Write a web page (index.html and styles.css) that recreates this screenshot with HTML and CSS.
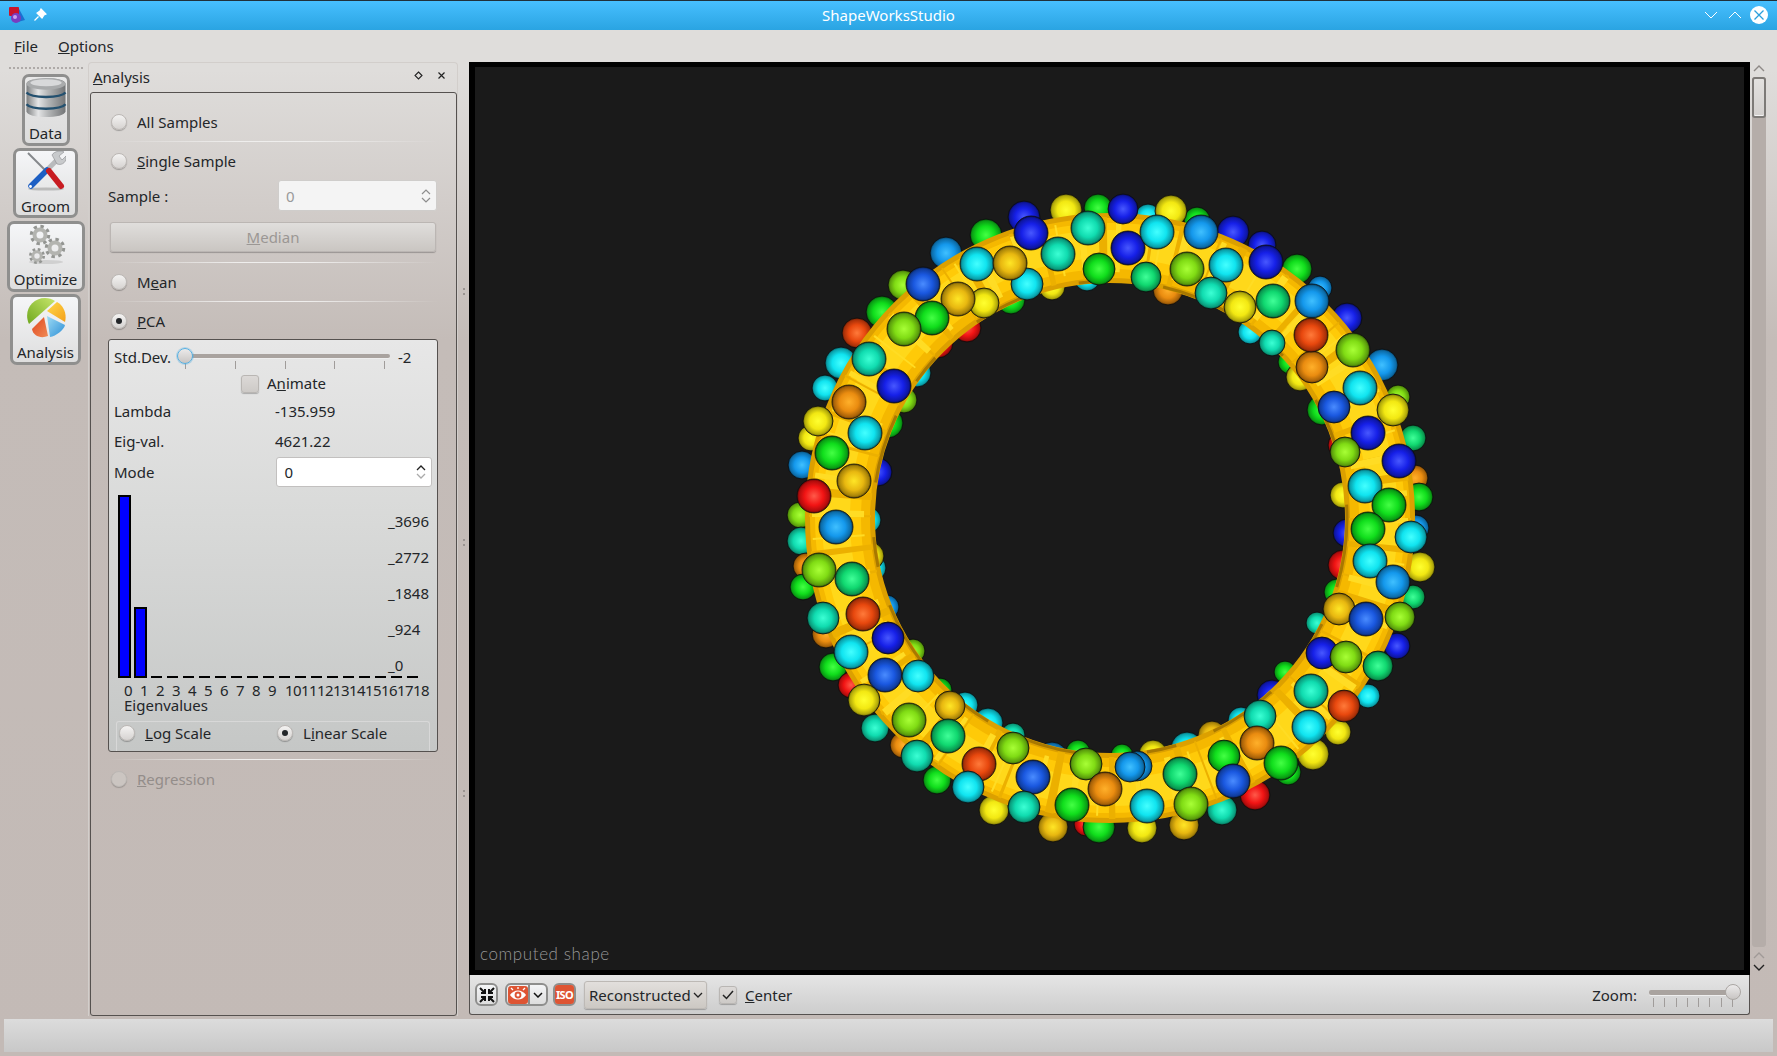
FILE: index.html
```html
<!DOCTYPE html>
<html lang="en">
<head>
<meta charset="utf-8">
<title>ShapeWorksStudio</title>
<link rel="stylesheet" href="styles.css">
</head>
<body>
<div class="window">
  <header class="titlebar">
    <div class="title-left">
      <svg class="app-logo" viewBox="0 0 18 18" width="18" height="18"><path d="M10 1 L17 14 L10 16 Z" fill="#1c6fd0"/><rect x="1" y="1" width="10" height="9" rx="1" fill="#c8142c"/><circle cx="8" cy="12" r="5" fill="#7a3cc0"/><circle cx="7" cy="11" r="2" fill="#c9a0ee"/></svg>
      <svg class="pin" viewBox="0 0 14 14" width="14" height="14"><path d="M8 1 L13 6 L11 7 L9 10 L4 5 L7 3 Z M5.5 8.5 L1.5 12.5" fill="#fff" stroke="#fff" stroke-width="1.2"/></svg>
    </div>
    <div class="title-text">ShapeWorksStudio</div>
    <div class="title-controls">
      <svg viewBox="0 0 14 8" width="14" height="8"><path d="M1 1 L7 7 L13 1" fill="none" stroke="#fff" stroke-width="1"/></svg>
      <svg viewBox="0 0 14 8" width="14" height="8"><path d="M1 7 L7 1 L13 7" fill="none" stroke="#fff" stroke-width="1"/></svg>
      <svg class="close-ic" viewBox="0 0 18 18" width="18" height="18"><circle cx="9" cy="9" r="9" fill="#fff"/><path d="M4.5 4.5 L13.5 13.5 M13.5 4.5 L4.5 13.5" stroke="#2b9fdc" stroke-width="1.3"/></svg>
    </div>
  </header>

  <nav class="menubar">
    <span class="menu-item"><u>F</u>ile</span>
    <span class="menu-item"><u>O</u>ptions</span>
  </nav>

  <div class="main">
    <aside class="toolcol">
      <div class="tool-handle"></div>
      <div class="tool tool-data">
        <svg viewBox="0 0 42 42" width="42" height="41">
          <defs><linearGradient id="metal" x1="0" x2="1" y1="0" y2="0"><stop offset="0" stop-color="#7d7f80"/><stop offset=".3" stop-color="#e4e5e6"/><stop offset=".55" stop-color="#b5b7b8"/><stop offset="1" stop-color="#737577"/></linearGradient></defs>
          <path d="M1 7 C1 -1 41 -1 41 7 L41 35 C41 43 1 43 1 35 Z" fill="url(#metal)"/>
          <ellipse cx="21" cy="7" rx="20" ry="6" fill="#a9abac"/>
          <ellipse cx="21" cy="6" rx="16" ry="3.6" fill="#d8d9da"/>
          <path d="M1 16 C6 22 36 22 41 16 M1 28 C6 34 36 34 41 28" fill="none" stroke="#23506f" stroke-width="2.4"/>
        </svg>
        <span>Data</span>
      </div>
      <div class="tool tool-groom">
        <svg viewBox="0 0 40 40" width="40" height="40">
          <ellipse cx="20" cy="38" rx="18" ry="1.6" fill="#bbb"/>
          <path d="M2 2 L20 20" stroke="#85888b" stroke-width="2"/>
          <path d="M22 18 L33 7" stroke="#b9bbbd" stroke-width="5"/>
          <path d="M26 4 C28 0 36 -1 38 1 L33 5 L36 9 L40 5 C41 10 37 15 31 13 Z" fill="#c8cacc" stroke="#8a8c8e" stroke-width=".6"/>
          <path d="M21 19 L5 35" stroke="#1d5fc4" stroke-width="5.5" stroke-linecap="round"/>
          <path d="M23 20 L35 35" stroke="#c81c22" stroke-width="6" stroke-linecap="round"/>
          <circle cx="4.5" cy="35.5" r="1.4" fill="#fff"/>
        </svg>
        <span>Groom</span>
      </div>
      <div class="tool tool-opt">
        <svg viewBox="0 0 40 42" width="40" height="42">
          <ellipse cx="20" cy="38" rx="17" ry="2" fill="#d0d0d0"/>
          <g fill="none" stroke="#939592">
            <circle cx="14" cy="11" r="8.5" stroke-width="3.5" stroke-dasharray="3.3 3.4"/>
            <circle cx="14" cy="11" r="5.5" stroke-width="4" stroke="#b3b4b0"/>
            <circle cx="29" cy="24" r="8.5" stroke-width="3.5" stroke-dasharray="3.3 3.4"/>
            <circle cx="29" cy="24" r="5.5" stroke-width="4" stroke="#b3b4b0"/>
            <circle cx="11" cy="32" r="6.5" stroke-width="3" stroke-dasharray="2.6 2.5"/>
            <circle cx="11" cy="32" r="4.2" stroke-width="3" stroke="#b3b4b0"/>
          </g>
        </svg>
        <span>Optimize</span>
      </div>
      <div class="tool tool-analysis">
        <svg viewBox="0 0 40 42" width="40" height="42">
          <defs>
            <linearGradient id="pg" x1="0" x2="1" y1="1" y2="0"><stop offset="0" stop-color="#6fa81e"/><stop offset="1" stop-color="#c7e66b"/></linearGradient>
            <linearGradient id="py" x1="0" x2="1" y1="0" y2="1"><stop offset="0" stop-color="#ffd94a"/><stop offset="1" stop-color="#f4a01a"/></linearGradient>
            <linearGradient id="pb" x1="0" x2="1" y1="0" y2="1"><stop offset="0" stop-color="#9fdcf5"/><stop offset="1" stop-color="#2d8fd6"/></linearGradient>
            <linearGradient id="pr" x1="0" x2="1" y1="0" y2="1"><stop offset="0" stop-color="#e0461e"/><stop offset="1" stop-color="#f08a55"/></linearGradient>
          </defs>
          <path d="M3 27 C-3 14 6 1 19 1 C23 1 26 2 29 4 Z" fill="url(#pg)"/>
          <path d="M21 14 L31 5 C38 9 41 17 39 25 Z" fill="url(#py)"/>
          <path d="M21 19 L39 28 C38 33 30 39 24 40 Z" fill="url(#pb)"/>
          <path d="M18 20 L22 39 C15 42 7 39 6 32 Z" fill="url(#pr)"/>
        </svg>
        <span>Analysis</span>
      </div>
    </aside>

    <section class="dock">
      <div class="dock-head">
        <span class="dock-title"><u>A</u>nalysis</span>
        <span class="dock-btns">
          <svg viewBox="0 0 9 9" width="9" height="9"><path d="M4.5 1 L8 4.5 L4.5 8 L1 4.5 Z" fill="none" stroke="#222" stroke-width="1.1"/></svg>
          <svg viewBox="0 0 9 9" width="9" height="9"><path d="M1.5 1.5 L7.5 7.5 M7.5 1.5 L1.5 7.5" stroke="#222" stroke-width="1.2"/></svg>
        </span>
      </div>
      <div class="dock-frame">
        <label class="radio-row"><i class="radio"></i>All Samples</label>
        <div class="sep"></div>
        <label class="radio-row"><i class="radio"></i><span><u>S</u>ingle Sample</span></label>
        <div class="sample-row">
          <span>Sample :</span>
          <div class="spin spin-off"><span>0</span>
            <svg viewBox="0 0 10 18" width="10" height="18"><path d="M1 7 L5 3 L9 7 M1 11 L5 15 L9 11" fill="none" stroke="#8d8d8d" stroke-width="1.2"/></svg>
          </div>
        </div>
        <button class="median"><u>M</u>edian</button>
        <div class="sep sep-wide"></div>
        <label class="radio-row"><i class="radio"></i><span>M<u>e</u>an</span></label>
        <div class="sep"></div>
        <label class="radio-row"><i class="radio on"></i><span><u>P</u>CA</span></label>

        <div class="pca-box">
          <div class="std-row">
            <span class="std-label">Std.Dev.</span>
            <div class="slider">
              <div class="groove"></div>
              <div class="ticks"><i></i><i></i><i></i><i></i><i></i></div>
              <div class="handle handle-focus"></div>
            </div>
            <span class="std-val">-2</span>
          </div>
          <div class="animate-row"><i class="check"></i><span>A<u>n</u>imate</span></div>
          <div class="kv kv-first"><span>Lambda</span><span>-135.959</span></div>
          <div class="kv"><span>Eig-val.</span><span>4621.22</span></div>
          <div class="mode-row"><span>Mode</span>
            <div class="spin spin-on"><span>0</span>
              <svg viewBox="0 0 10 18" width="10" height="18"><path d="M1 7 L5 3 L9 7" fill="none" stroke="#222" stroke-width="1.3"/><path d="M1 11 L5 15 L9 11" fill="none" stroke="#aaa" stroke-width="1.3"/></svg>
            </div>
          </div>
          <div class="chart">
            <div class="bars">
              <i class="bar" style="height:183px"></i><i class="bar" style="height:71px"></i>
              <i class="zero"></i><i class="zero"></i><i class="zero"></i><i class="zero"></i><i class="zero"></i><i class="zero"></i><i class="zero"></i><i class="zero"></i><i class="zero"></i><i class="zero"></i><i class="zero"></i><i class="zero"></i><i class="zero"></i><i class="zero"></i><i class="zero"></i><i class="zero"></i><i class="zero"></i>
            </div>
            <div class="yaxis"><span>_3696</span><span>_2772</span><span>_1848</span><span>_924</span><span>_0</span></div>
          </div>
          <div class="xlabels"><span>0</span><span>1</span><span>2</span><span>3</span><span>4</span><span>5</span><span>6</span><span>7</span><span>8</span><span>9</span><span>10</span><span>11</span><span>12</span><span>13</span><span>14</span><span>15</span><span>16</span><span>17</span><span>18</span></div>
          <div class="xtitle">Eigenvalues</div>
          <div class="scale-row">
            <label><i class="radio"></i><span><u>L</u>og Scale</span></label>
            <label><i class="radio on"></i><span>L<u>i</u>near Scale</span></label>
          </div>
        </div>

        <div class="sep"></div>
        <label class="radio-row off"><i class="radio"></i><span><u>R</u>egression</span></label>
      </div>
    </section>

    <div class="splitter"><i></i><i></i><i></i></div>

    <section class="center">
      <div class="viewer">
        <svg class="scene" viewBox="475 67 1269 903" width="1269" height="903">
          <defs>
            <radialGradient id="R"><stop offset="0" stop-color="#ff5a4a"/><stop offset=".55" stop-color="#f21414"/><stop offset=".88" stop-color="#b00c0c"/><stop offset="1" stop-color="#5a0606"/></radialGradient>
            <radialGradient id="O"><stop offset="0" stop-color="#ff7a3a"/><stop offset=".55" stop-color="#e8480e"/><stop offset=".88" stop-color="#a83008"/><stop offset="1" stop-color="#581a04"/></radialGradient>
            <radialGradient id="A"><stop offset="0" stop-color="#ffb02a"/><stop offset=".55" stop-color="#ea8c10"/><stop offset=".88" stop-color="#a86208"/><stop offset="1" stop-color="#5a3504"/></radialGradient>
            <radialGradient id="G"><stop offset="0" stop-color="#ffe626"/><stop offset=".55" stop-color="#e8b810"/><stop offset=".88" stop-color="#a88308"/><stop offset="1" stop-color="#5a4604"/></radialGradient>
            <radialGradient id="Y"><stop offset="0" stop-color="#ffff30"/><stop offset=".55" stop-color="#f2e812"/><stop offset=".88" stop-color="#b0a80a"/><stop offset="1" stop-color="#5c5804"/></radialGradient>
            <radialGradient id="L"><stop offset="0" stop-color="#a8ff36"/><stop offset=".55" stop-color="#80dc14"/><stop offset=".88" stop-color="#5a9c0c"/><stop offset="1" stop-color="#2e5006"/></radialGradient>
            <radialGradient id="N"><stop offset="0" stop-color="#44ff44"/><stop offset=".55" stop-color="#10de1c"/><stop offset=".88" stop-color="#0a9c14"/><stop offset="1" stop-color="#04500a"/></radialGradient>
            <radialGradient id="E"><stop offset="0" stop-color="#40ff98"/><stop offset=".55" stop-color="#10d870"/><stop offset=".88" stop-color="#0a9850"/><stop offset="1" stop-color="#044e28"/></radialGradient>
            <radialGradient id="T"><stop offset="0" stop-color="#3cffd4"/><stop offset=".55" stop-color="#10dcb0"/><stop offset=".88" stop-color="#0a9c7c"/><stop offset="1" stop-color="#045040"/></radialGradient>
            <radialGradient id="C"><stop offset="0" stop-color="#44ffff"/><stop offset=".55" stop-color="#10e4f0"/><stop offset=".88" stop-color="#0aa0aa"/><stop offset="1" stop-color="#045258"/></radialGradient>
            <radialGradient id="S"><stop offset="0" stop-color="#40c0ff"/><stop offset=".55" stop-color="#1498ec"/><stop offset=".88" stop-color="#0c6ca8"/><stop offset="1" stop-color="#063858"/></radialGradient>
            <radialGradient id="B"><stop offset="0" stop-color="#4a8cff"/><stop offset=".55" stop-color="#1a58e0"/><stop offset=".88" stop-color="#103ea0"/><stop offset="1" stop-color="#082054"/></radialGradient>
            <radialGradient id="D"><stop offset="0" stop-color="#4858ff"/><stop offset=".55" stop-color="#1620e8"/><stop offset=".88" stop-color="#0e16a4"/><stop offset="1" stop-color="#060a56"/></radialGradient>
          </defs>
          <g class="back">
            <circle cx="1024" cy="217" r="16" fill="url(#D)"/><circle cx="1066" cy="210" r="16" fill="url(#Y)"/><circle cx="1098" cy="208" r="14" fill="url(#N)"/><circle cx="986" cy="235" r="16" fill="url(#N)"/><circle cx="946" cy="253" r="16" fill="url(#S)"/><circle cx="1052" cy="287" r="13" fill="url(#Y)"/><circle cx="1087" cy="278" r="13" fill="url(#C)"/><circle cx="1011" cy="300" r="14" fill="url(#N)"/><circle cx="903" cy="285" r="15" fill="url(#L)"/><circle cx="882" cy="312" r="16" fill="url(#N)"/><circle cx="857" cy="333" r="15" fill="url(#O)"/><circle cx="967" cy="328" r="14" fill="url(#R)"/><circle cx="938" cy="343" r="15" fill="url(#R)"/><circle cx="841" cy="363" r="16" fill="url(#C)"/><circle cx="917" cy="373" r="14" fill="url(#C)"/><circle cx="825" cy="388" r="13" fill="url(#C)"/><circle cx="904" cy="400" r="13" fill="url(#L)"/><circle cx="888" cy="423" r="15" fill="url(#N)"/><circle cx="811" cy="438" r="13" fill="url(#Y)"/><circle cx="802" cy="465" r="14" fill="url(#S)"/><circle cx="878" cy="472" r="14" fill="url(#D)"/>
            <circle cx="1148" cy="217" r="13" fill="url(#C)"/><circle cx="1197" cy="220" r="13" fill="url(#N)"/><circle cx="1171" cy="211" r="16" fill="url(#Y)"/><circle cx="1233" cy="232" r="16" fill="url(#D)"/><circle cx="1262" cy="245" r="14" fill="url(#D)"/><circle cx="1297" cy="269" r="15" fill="url(#N)"/><circle cx="1168" cy="290" r="15" fill="url(#A)"/><circle cx="1320" cy="288" r="12" fill="url(#S)"/><circle cx="1347" cy="318" r="15" fill="url(#D)"/><circle cx="1250" cy="332" r="12" fill="url(#C)"/><circle cx="1290" cy="362" r="12" fill="url(#N)"/><circle cx="1300" cy="377" r="14" fill="url(#Y)"/><circle cx="1382" cy="365" r="16" fill="url(#S)"/><circle cx="1398" cy="397" r="12" fill="url(#L)"/><circle cx="1322" cy="410" r="15" fill="url(#N)"/><circle cx="1413" cy="438" r="13" fill="url(#E)"/><circle cx="1341" cy="445" r="13" fill="url(#R)"/><circle cx="1415" cy="478" r="13" fill="url(#A)"/><circle cx="1343" cy="495" r="13" fill="url(#Y)"/><circle cx="1419" cy="497" r="14" fill="url(#N)"/>
            <circle cx="1347" cy="533" r="14" fill="url(#D)"/><circle cx="1416" cy="528" r="13" fill="url(#S)"/><circle cx="1343" cy="565" r="15" fill="url(#R)"/><circle cx="1420" cy="567" r="15" fill="url(#Y)"/><circle cx="1337" cy="592" r="13" fill="url(#N)"/><circle cx="1413" cy="597" r="12" fill="url(#E)"/><circle cx="1317" cy="623" r="11" fill="url(#T)"/><circle cx="1397" cy="646" r="13" fill="url(#D)"/><circle cx="1368" cy="696" r="12" fill="url(#C)"/><circle cx="1272" cy="695" r="15" fill="url(#D)"/><circle cx="1285" cy="672" r="11" fill="url(#N)"/><circle cx="1241" cy="720" r="13" fill="url(#C)"/><circle cx="1338" cy="732" r="13" fill="url(#Y)"/><circle cx="1212" cy="735" r="14" fill="url(#G)"/><circle cx="1187" cy="748" r="16" fill="url(#C)"/><circle cx="1153" cy="754" r="14" fill="url(#Y)"/><circle cx="1288" cy="772" r="13" fill="url(#N)"/><circle cx="1313" cy="754" r="16" fill="url(#Y)"/><circle cx="1255" cy="795" r="15" fill="url(#R)"/><circle cx="1222" cy="810" r="15" fill="url(#T)"/><circle cx="1184" cy="825" r="15" fill="url(#G)"/><circle cx="1142" cy="828" r="15" fill="url(#Y)"/>
            <circle cx="800" cy="515" r="13" fill="url(#L)"/><circle cx="868" cy="520" r="13" fill="url(#C)"/><circle cx="801" cy="541" r="14" fill="url(#T)"/><circle cx="873" cy="568" r="13" fill="url(#C)"/><circle cx="870" cy="556" r="14" fill="url(#Y)"/><circle cx="806" cy="566" r="13" fill="url(#A)"/><circle cx="803" cy="587" r="13" fill="url(#N)"/><circle cx="887" cy="607" r="12" fill="url(#S)"/><circle cx="826" cy="634" r="14" fill="url(#A)"/><circle cx="913" cy="651" r="12" fill="url(#L)"/><circle cx="833" cy="667" r="14" fill="url(#N)"/><circle cx="851" cy="685" r="13" fill="url(#R)"/><circle cx="940" cy="690" r="12" fill="url(#N)"/><circle cx="965" cy="705" r="13" fill="url(#C)"/><circle cx="875" cy="728" r="14" fill="url(#T)"/><circle cx="988" cy="723" r="15" fill="url(#C)"/><circle cx="1013" cy="735" r="12" fill="url(#T)"/><circle cx="903" cy="745" r="13" fill="url(#A)"/><circle cx="1052" cy="758" r="16" fill="url(#S)"/><circle cx="1078" cy="752" r="12" fill="url(#N)"/><circle cx="1122" cy="755" r="11" fill="url(#N)"/><circle cx="937" cy="780" r="14" fill="url(#N)"/><circle cx="994" cy="810" r="15" fill="url(#Y)"/><circle cx="1053" cy="827" r="15" fill="url(#G)"/><circle cx="1086" cy="824" r="12" fill="url(#R)"/><circle cx="1099" cy="827" r="16" fill="url(#N)"/>
          </g>
          <g class="tube" fill="none">
            <circle cx="1110" cy="518" r="270" stroke="#dca000" stroke-width="70"/>
            <circle cx="1110" cy="518" r="270" stroke="#f5b800" stroke-width="60"/>
            <circle cx="1110" cy="518" r="272" stroke="#ffca08" stroke-width="46"/>
            <circle cx="1110" cy="518" r="274" stroke="#ffd81a" stroke-width="28"/>
            <circle cx="1110" cy="518" r="270" stroke="#ecb000" stroke-width="62" stroke-dasharray="3 23 6 31 2 17 8 41"/>
            <circle cx="1110" cy="518" r="272" stroke="#ffdc24" stroke-width="52" stroke-dasharray="5 37 2 19 7 29"/>
            <circle cx="1110" cy="518" r="237" stroke="#a87800" stroke-width="3" stroke-dasharray="70 40 30 55"/>
          </g>
          <g class="front">
            <circle cx="1123" cy="209" r="15" fill="url(#D)"/><circle cx="1031" cy="233" r="17" fill="url(#D)"/><circle cx="1088" cy="228" r="17" fill="url(#T)"/><circle cx="1128" cy="248" r="17" fill="url(#D)"/><circle cx="1058" cy="254" r="17" fill="url(#T)"/><circle cx="1099" cy="269" r="16" fill="url(#N)"/><circle cx="1027" cy="284" r="16" fill="url(#C)"/><circle cx="977" cy="264" r="17" fill="url(#C)"/><circle cx="1010" cy="263" r="17" fill="url(#G)"/><circle cx="984" cy="303" r="15" fill="url(#Y)"/><circle cx="923" cy="284" r="17" fill="url(#B)"/><circle cx="958" cy="299" r="17" fill="url(#G)"/><circle cx="932" cy="318" r="17" fill="url(#N)"/><circle cx="904" cy="329" r="17" fill="url(#L)"/><circle cx="869" cy="359" r="17" fill="url(#T)"/><circle cx="894" cy="386" r="17" fill="url(#D)"/><circle cx="849" cy="402" r="17" fill="url(#A)"/><circle cx="818" cy="421" r="15" fill="url(#Y)"/><circle cx="865" cy="433" r="17" fill="url(#C)"/><circle cx="832" cy="453" r="17" fill="url(#N)"/><circle cx="854" cy="481" r="17" fill="url(#G)"/><circle cx="814" cy="496" r="17" fill="url(#R)"/>
            <circle cx="1157" cy="232" r="17" fill="url(#C)"/><circle cx="1201" cy="232" r="17" fill="url(#S)"/><circle cx="1266" cy="262" r="17" fill="url(#D)"/><circle cx="1226" cy="265" r="17" fill="url(#C)"/><circle cx="1187" cy="269" r="17" fill="url(#L)"/><circle cx="1146" cy="277" r="15" fill="url(#E)"/><circle cx="1211" cy="293" r="16" fill="url(#T)"/><circle cx="1240" cy="307" r="16" fill="url(#Y)"/><circle cx="1273" cy="301" r="17" fill="url(#E)"/><circle cx="1312" cy="301" r="17" fill="url(#S)"/><circle cx="1272" cy="343" r="13" fill="url(#T)"/><circle cx="1312" cy="367" r="16" fill="url(#A)"/><circle cx="1311" cy="335" r="17" fill="url(#O)"/><circle cx="1353" cy="350" r="17" fill="url(#L)"/><circle cx="1360" cy="388" r="17" fill="url(#C)"/><circle cx="1393" cy="410" r="16" fill="url(#Y)"/><circle cx="1334" cy="407" r="16" fill="url(#B)"/><circle cx="1368" cy="433" r="17" fill="url(#D)"/><circle cx="1345" cy="452" r="15" fill="url(#L)"/><circle cx="1399" cy="461" r="17" fill="url(#D)"/><circle cx="1365" cy="486" r="17" fill="url(#C)"/>
            <circle cx="1389" cy="505" r="17" fill="url(#N)"/><circle cx="1368" cy="529" r="17" fill="url(#N)"/><circle cx="1411" cy="537" r="16" fill="url(#C)"/><circle cx="1370" cy="561" r="17" fill="url(#C)"/><circle cx="1393" cy="582" r="17" fill="url(#S)"/><circle cx="1339" cy="609" r="16" fill="url(#G)"/><circle cx="1400" cy="617" r="15" fill="url(#L)"/><circle cx="1366" cy="619" r="17" fill="url(#B)"/><circle cx="1322" cy="653" r="16" fill="url(#D)"/><circle cx="1346" cy="657" r="16" fill="url(#L)"/><circle cx="1378" cy="666" r="15" fill="url(#E)"/><circle cx="1311" cy="691" r="17" fill="url(#T)"/><circle cx="1344" cy="706" r="16" fill="url(#O)"/><circle cx="1260" cy="716" r="16" fill="url(#T)"/><circle cx="1309" cy="727" r="17" fill="url(#C)"/><circle cx="1224" cy="756" r="16" fill="url(#N)"/><circle cx="1257" cy="743" r="17" fill="url(#A)"/><circle cx="1281" cy="763" r="17" fill="url(#N)"/><circle cx="1137" cy="766" r="15" fill="url(#S)"/><circle cx="1180" cy="774" r="17" fill="url(#E)"/><circle cx="1233" cy="781" r="17" fill="url(#B)"/><circle cx="1191" cy="804" r="17" fill="url(#L)"/><circle cx="1147" cy="806" r="17" fill="url(#C)"/>
            <circle cx="836" cy="527" r="17" fill="url(#S)"/><circle cx="819" cy="570" r="17" fill="url(#L)"/><circle cx="852" cy="579" r="17" fill="url(#E)"/><circle cx="823" cy="618" r="16" fill="url(#T)"/><circle cx="863" cy="614" r="17" fill="url(#O)"/><circle cx="888" cy="638" r="16" fill="url(#D)"/><circle cx="851" cy="652" r="17" fill="url(#C)"/><circle cx="885" cy="675" r="17" fill="url(#B)"/><circle cx="918" cy="676" r="16" fill="url(#C)"/><circle cx="864" cy="700" r="16" fill="url(#Y)"/><circle cx="950" cy="706" r="15" fill="url(#G)"/><circle cx="909" cy="720" r="17" fill="url(#L)"/><circle cx="948" cy="736" r="17" fill="url(#E)"/><circle cx="1013" cy="748" r="16" fill="url(#L)"/><circle cx="917" cy="756" r="16" fill="url(#T)"/><circle cx="1086" cy="764" r="16" fill="url(#L)"/><circle cx="979" cy="764" r="17" fill="url(#O)"/><circle cx="1033" cy="777" r="17" fill="url(#B)"/><circle cx="1130" cy="767" r="15" fill="url(#S)"/><circle cx="1105" cy="789" r="17" fill="url(#A)"/><circle cx="1072" cy="805" r="17" fill="url(#N)"/><circle cx="968" cy="787" r="16" fill="url(#C)"/><circle cx="1024" cy="807" r="16" fill="url(#T)"/>
          </g>
        </svg>
        <div class="caption">computed shape</div>
      </div>
      <div class="viewbar">
        <button class="vbtn">
          <svg viewBox="0 0 16 16" width="16" height="16"><path d="M1 1 L6 6 M6 2 V6 H2 M15 1 L10 6 M10 2 V6 H14 M1 15 L6 10 M6 14 V10 H2 M15 15 L10 10 M10 14 V10 H14" fill="none" stroke="#111" stroke-width="2"/></svg>
        </button>
        <div class="vsplit">
          <span class="vsplit-main"><svg viewBox="0 0 20 18" width="20" height="18"><rect x="0" y="0" width="20" height="18" rx="3" fill="#de5433"/><path d="M2 9 C6 3 14 3 18 9 C14 15 6 15 2 9 Z" fill="#fff"/><circle cx="10" cy="9" r="3.4" fill="#de5433"/><circle cx="10" cy="9" r="1.5" fill="#fff"/><path d="M3 2 L5 4 M10 1 V3 M17 2 L15 4" stroke="#fff" stroke-width="1.3"/></svg></span>
          <span class="vsplit-arrow"><svg viewBox="0 0 10 6" width="10" height="6"><path d="M1 1 L5 5 L9 1" fill="none" stroke="#111" stroke-width="1.5"/></svg></span>
        </div>
        <button class="vbtn vbtn-iso"><span class="iso">ISO</span></button>
        <div class="combo"><span>Reconstructed</span><svg viewBox="0 0 10 6" width="10" height="6"><path d="M1 1 L5 5 L9 1" fill="none" stroke="#222" stroke-width="1.3"/></svg></div>
        <i class="check check-on"><svg viewBox="0 0 12 10" width="12" height="10"><path d="M1 5 L4.5 8.5 L11 1" fill="none" stroke="#222" stroke-width="1.5"/></svg></i>
        <span class="center-label"><u>C</u>enter</span>
        <span class="zoom-label">Zoom:</span>
        <div class="zoom-slider">
          <div class="groove zoom-groove"></div>
          <div class="ticks zoom-ticks"><i></i><i></i><i></i><i></i><i></i><i></i><i></i><i></i></div>
          <div class="handle zoom-handle"></div>
        </div>
      </div>
    </section>

    <div class="vscroll">
      <svg viewBox="0 0 12 7" width="12" height="7"><path d="M1 6 L6 1 L11 6" fill="none" stroke="#8e8986" stroke-width="1.4"/></svg>
      <div class="vtrack"><div class="vthumb"></div></div>
      <svg viewBox="0 0 12 7" width="12" height="7"><path d="M1 6 L6 1 L11 6" fill="none" stroke="#a09a97" stroke-width="1.4"/></svg>
      <svg viewBox="0 0 12 7" width="12" height="7"><path d="M1 1 L6 6 L11 1" fill="none" stroke="#222" stroke-width="1.4"/></svg>
    </div>
  </div>

  <footer class="statusbar"></footer>
</div>
</body>
</html>
```
FILE: styles.css
```css
* { box-sizing: border-box; }
html, body { margin: 0; padding: 0; }
body { width: 1777px; height: 1056px; overflow: hidden; font-family: "Noto Sans", sans-serif; font-size: 15px; color: #232629; }
i { display: block; font-style: normal; }
button { font: inherit; }

.window { width: 1777px; height: 1056px; display: flex; flex-direction: column; background: linear-gradient(#dfdddb 0, #dfdddb 70px, #c4bcb8 340px, #c3bab6 100%); padding-bottom: 4px; }

.titlebar { height: 30px; flex: none; display: flex; align-items: center; padding-bottom: 2px; color: #fff; font-size: 15px; position: relative; border-top: 1px solid #20303a; background: linear-gradient(#47bfff, #2aa4e2); }
.title-left { display: flex; align-items: center; gap: 7px; padding-left: 8px; width: 200px; }
.title-text { flex: 1; text-align: center; }
.title-controls { width: 200px; display: flex; align-items: center; justify-content: flex-end; gap: 10px; padding-right: 9px; }
.close-ic { margin-left: -2px; }

.menubar { height: 32px; flex: none; display: flex; align-items: center; gap: 20px; padding-left: 14px; background: #dfdddb; }
.menu-item { line-height: 20px; }

.main { flex: 1; display: flex; padding-left: 4px; min-height: 0; }

.toolcol { width: 83px; margin-right: 1px; flex: none; display: flex; flex-direction: column; align-items: center; gap: 2px; }
.tool-handle { width: 74px; height: 5px; margin-top: 5px; border-top: 2px dotted #aeaaa8; flex: none; }
.tool { display: flex; flex-direction: column; align-items: center; justify-content: space-between; padding-bottom: 1px; border: 3px solid #8f8f8e; border-radius: 7px; background: linear-gradient(#f5f6f8, #dedede); flex: none; }
.tool span { line-height: 17px; }
.tool-data { width: 48px; height: 72px; background: linear-gradient(#e9e9e9, #dcdcdc); }
.tool-groom { width: 65px; height: 70px; padding-bottom: 0; }
.tool-opt { width: 78px; height: 71px; margin-top: 1px; }
.tool-analysis { width: 71px; height: 71px; }

.dock { width: 370px; flex: none; display: flex; flex-direction: column; height: 954px; border: 1px solid #d2cecb; border-bottom: 0; border-radius: 4px 4px 0 0; }
.dock-head { height: 29px; display: flex; align-items: center; justify-content: space-between; padding: 0 11px 0 4px; flex: none; }
.dock-title { margin-top: -1px; }
.dock-btns { display: flex; gap: 14px; align-items: center; margin-top: -4px; }
.dock-frame { flex: 1; margin: 0 0 0 1px; border: 1px solid #55514f; border-radius: 3px; padding: 17px 18px 0 17px; width: 367px; }

.radio-row { height: 24px; display: flex; align-items: center; gap: 10px; padding-left: 3px; }
.radio-row.off { color: #938d8a; }
.radio { width: 16px; height: 16px; flex: none; border-radius: 50%; background: linear-gradient(#f4f3f2, #d6d3d1); border: 1px solid #bcb8b5; box-shadow: 0 1px 1px rgba(0,0,0,.28); position: relative; }
.radio.on::after { content: ""; position: absolute; left: 4px; top: 4px; width: 6px; height: 6px; border-radius: 50%; background: #232629; }
.off .radio { background: #cbc5c1; box-shadow: 0 1px 1px rgba(0,0,0,.2); }

.sep { height: 1px; margin: 7px 0; background: linear-gradient(90deg, rgba(240,240,240,0) 0, #efeeed 40%, #efeeed 60%, rgba(240,240,240,0) 100%); }
.sep-wide { margin-top: 10px; }

.sample-row { height: 31px; margin-top: 7px; display: flex; align-items: center; justify-content: space-between; padding-right: 1px; }
.spin { display: flex; align-items: center; justify-content: space-between; background: #fff; border-radius: 3px; }
.spin-off { width: 159px; height: 31px; background: #f4f4f4; border: 1px solid #cfcdcb; color: #9a9a9a; padding: 0 5px 0 7px; }
.median { display: block; width: 326px; height: 30px; margin: 11px 0 0 2px; border: 1px solid #bbb6b3; border-radius: 3px; background: linear-gradient(#e0dedc, #cac6c2); color: #9b9794; box-shadow: 0 1px 1px rgba(0,0,0,.25); padding: 0; }

.pca-box { height: 413px; margin-top: 6px; border: 1px solid #55514f; border-radius: 3px; padding: 0 5px; background: linear-gradient(#e7e7e7, #d8d9d8 45%, #c5c7c6); }
.std-row { height: 34px; display: flex; align-items: flex-start; padding-top: 6px; }
.std-label { width: 63px; line-height: 20px; margin-top: 1px; white-space: nowrap; }
.slider { width: 216px; height: 26px; position: relative; margin-right: 5px; padding: 8px 8px 0; }
.std-val { line-height: 20px; margin-top: 1px; }
.groove { height: 4px; border-radius: 2px; background: #a9a39f; box-shadow: 0 1px 0 #eee; }
.slider .groove { margin-right: -5px; }
.ticks { display: flex; justify-content: space-between; margin-top: 3px; }
.ticks i { width: 1px; height: 8px; background: #a09c9a; }
.handle { position: absolute; width: 16px; height: 16px; border-radius: 50%; background: linear-gradient(#ebeaea, #c8c5c3); border: 1px solid #aaa6a3; }
.handle-focus { left: 0; top: 2px; border-color: #55b0e2; box-shadow: 0 0 0 1px rgba(85,176,226,.35); }
.animate-row { height: 20px; padding-left: 127px; display: flex; align-items: center; gap: 8px; }
.animate-row span { margin-top: -2px; }
.check { width: 18px; height: 18px; flex: none; border-radius: 3px; background: linear-gradient(#dcd9d7, #cdcac7); border: 1px solid #b9b6b3; box-shadow: 0 1px 1px rgba(0,0,0,.25); }
.kv { height: 20px; display: flex; align-items: center; margin-top: 7px; }
.kv + .kv { margin-top: 10px; }
.kv span:first-child, .mode-row > span { width: 161px; }
.mode-row { height: 30px; margin-top: 6px; display: flex; align-items: center; }
.spin-on { width: 156px; height: 30px; border: 1px solid #c2c0bf; padding: 0 5px 0 7px; color: #232629; margin-left: 2px; }

.chart { position: relative; height: 183px; margin-top: 8px; padding-left: 4px; }
.bars { height: 183px; display: flex; align-items: flex-end; gap: 3px; }
.bar { width: 13px; background: #0000ff; border: 2px solid #000; flex: none; }
.zero { width: 11px; height: 2px; background: #000; margin: 0 1px; flex: none; }
.yaxis { position: absolute; left: 274px; top: 8px; display: flex; flex-direction: column; }
.yaxis span { height: 36px; line-height: 36px; }
.xlabels { display: flex; margin: 3px 0 0 6px; height: 17px; line-height: 18px; }
.xlabels span { width: 16px; flex: none; text-align: center; white-space: nowrap; letter-spacing: -.7px; }
.xlabels span:nth-child(11) { margin-left: 5px; }
.xtitle { margin-left: 10px; height: 16px; line-height: 14px; }
.scale-row { display: grid; grid-template-columns: 158px 156px; margin: 7px 0 0 2px; height: 30px; width: 314px; border: 1px solid #d8d8d8; border-bottom: 0; border-radius: 3px 3px 0 0; }
.scale-row label { display: flex; align-items: center; gap: 10px; padding-left: 2px; height: 21px; }

.splitter { width: 11px; flex: none; display: flex; flex-direction: column; align-items: center; gap: 244px; padding-top: 226px; }
.splitter i { height: 7px; border-left: 2px dotted #9a9491; }

.center { width: 1281px; flex: none; display: flex; flex-direction: column; height: 953px; }
.viewer { height: 913px; flex: none; position: relative; background: #1a1a1a; border: solid #000; border-width: 5px 6px; }
.scene { display: block; }
.back circle, .front circle { stroke: #0c0c0c; stroke-width: .8; }
.caption { position: absolute; left: 5px; bottom: 6px; font-family: Lato, sans-serif; font-weight: 300; font-size: 17px; letter-spacing: .6px; color: #989898; }
.viewbar { flex: 1; display: flex; align-items: center; padding: 0 8px 0 5px; border: 1px solid #55514f; border-top: 0; border-radius: 0 0 3px 3px; background: linear-gradient(#e5e5e5, #cdcdcd); }
.vbtn { width: 23px; height: 23px; border: 2px solid #8e8e8d; border-radius: 6px; background: linear-gradient(#f4f5f7, #dddddd); padding: 0; display: flex; align-items: center; justify-content: center; flex: none; }
.vsplit { width: 43px; height: 23px; margin-left: 7px; display: flex; border: 2px solid #8e8e8d; border-radius: 6px; overflow: hidden; background: linear-gradient(#f4f5f7, #dddddd); flex: none; }
.vsplit-main { width: 23px; display: flex; align-items: center; justify-content: center; border-right: 2px solid #8e8e8d; }
.vsplit-arrow { flex: 1; display: flex; align-items: center; justify-content: center; }
.vbtn-iso { margin-left: 5px; }
.iso { display: block; width: 19px; height: 19px; border-radius: 3px; background: #de5433; color: #fff; font-size: 11px; line-height: 19px; font-weight: 700; text-align: center; letter-spacing: -.7px; }
.combo { width: 123px; height: 28px; margin-left: 8px; display: flex; align-items: center; gap: 2px; padding-left: 4px; border: 1px solid #bdb9b5; border-radius: 3px; background: linear-gradient(#e2dfdc, #ccc8c3); box-shadow: 0 1px 1px rgba(0,0,0,.25); white-space: nowrap; flex: none; }
.check-on { display: flex; align-items: center; justify-content: center; margin-left: 12px; }
.center-label { margin-left: 8px; }
.zoom-label { margin-left: auto; margin-right: 12px; }
.zoom-slider { width: 92px; height: 30px; position: relative; padding: 10px 8px 0 0; }
.zoom-groove { height: 5px; }
.zoom-ticks { margin: 3px 0 0 4px; }
.zoom-ticks i { height: 9px; }
.zoom-handle { right: 0; top: 4px; }

.vscroll { width: 23px; flex: none; height: 953px; padding: 3px 7px 0 2px; display: flex; flex-direction: column; align-items: center; gap: 5px; }
.vscroll svg { flex: none; }
.vtrack { width: 14px; height: 870px; background: #b5ada9; border-radius: 3px; flex: none; border: 1px solid #b5ada9; }
.vthumb { height: 41px; margin: -1px; background: linear-gradient(#e3e1df, #d3d0ce); border: 2px solid #7d7a77; border-radius: 3px; box-shadow: inset 0 -1px 0 #f4f4f4; }

.statusbar { height: 33px; flex: none; margin: 0 4px; background: linear-gradient(#dcdcdc, #c8c8c8); }
```
